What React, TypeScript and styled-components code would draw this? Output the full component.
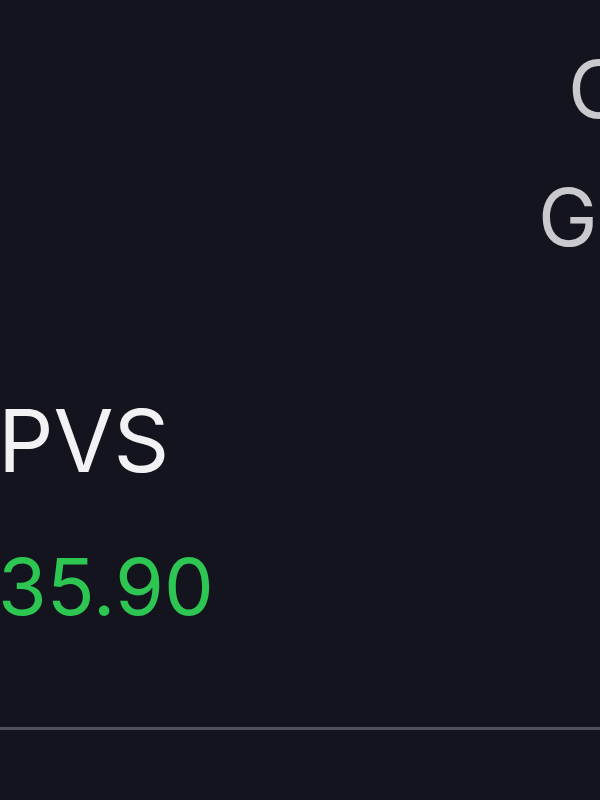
import React from "react";
import styled, { createGlobalStyle } from "styled-components";

const Global = createGlobalStyle`
  html, body { margin: 0; padding: 0; background: #14141e; }
  body { font-family: Inter, "Noto Sans", sans-serif; }
`;

const Screen = styled.div`
  width: 600px;
  height: 800px;
  overflow: hidden;
  background: #14141e;
  display: flex;
  flex-direction: column;
`;

const Header = styled.div`
  display: flex;
  flex-direction: column;
  padding-top: 40px;
  gap: 30px;
`;

const SideLabel = styled.div<{ $indent: number }>`
  padding-left: ${(p) => p.$indent}px;
  font-size: 80px;
  line-height: 98px;
  color: #c9c9ce;
  white-space: nowrap;
`;

const Row = styled.div`
  display: flex;
  flex-direction: column;
  padding-top: 120px;
  margin-left: -2px;
`;

const Ticker = styled.div`
  font-size: 87px;
  line-height: 110px;
  color: #f2f2f4;
  white-space: nowrap;
`;

const Price = styled.div`
  font-size: 79px;
  line-height: 100px;
  margin-top: 40px;
  color: #2dc653;
  white-space: nowrap;
`;

const Divider = styled.div`
  margin-top: 91px;
  height: 3px;
  background: #50505a;
`;

export default function App() {
  return (
    <>
      <Global />
      <Screen>
        <Header>
          <SideLabel $indent={568}>C</SideLabel>
          <SideLabel $indent={538}>G</SideLabel>
        </Header>
        <Row>
          <Ticker>PVS</Ticker>
          <Price>35.90</Price>
        </Row>
        <Divider />
      </Screen>
    </>
  );
}
